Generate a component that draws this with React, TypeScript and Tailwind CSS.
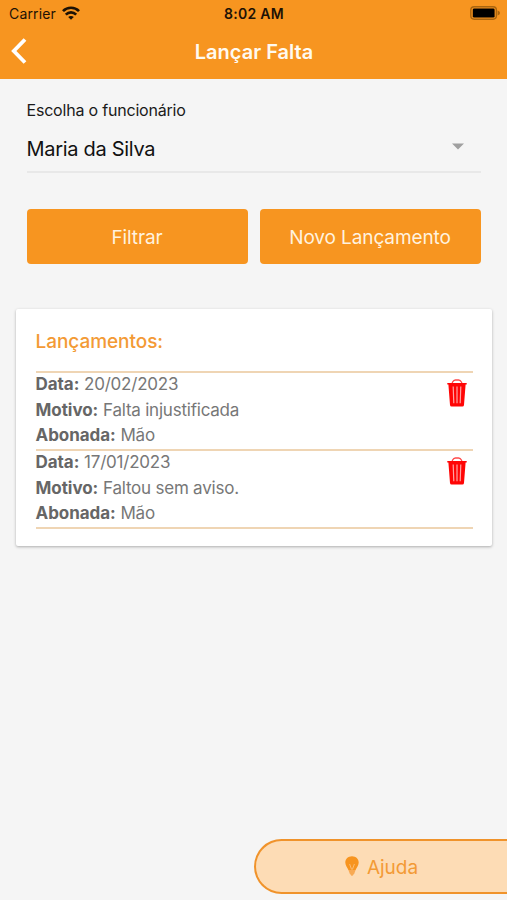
import React, { useState } from 'react';

type Lancamento = {
  id: number;
  data: string;
  motivo: string;
  abonada: string;
};

const LANCAMENTOS: Lancamento[] = [
  { id: 1, data: '20/02/2023', motivo: 'Falta injustificada', abonada: 'Mão' },
  { id: 2, data: '17/01/2023', motivo: 'Faltou sem aviso.', abonada: 'Mão' },
];

function WifiIcon() {
  return (
    <svg className="w-[18px] h-[14px] -mt-0.5" viewBox="0 0 18 14" fill="none" stroke="#1d1205" strokeWidth="2.7">
      <path d="M1 5.1 C5.4 0.6 12.6 0.6 17 5.1" />
      <path d="M3.8 8.6 C6.8 5.7 11.2 5.7 14.2 8.6" />
      <path d="M9 13.8 L6.2 11 C7.8 9.5 10.2 9.5 11.8 11 Z" fill="#1d1205" stroke="none" />
    </svg>
  );
}

function BatteryIcon() {
  return (
    <svg className="w-[31px] h-[14px] -mt-0.5" viewBox="0 0 31 14" fill="none">
      <rect x="0.8" y="0.8" width="25.6" height="12.4" rx="3.4" stroke="#a9650f" strokeWidth="1.4" />
      <rect x="2.8" y="2.4" width="21.8" height="9.2" rx="1.4" fill="#000000" />
      <path d="M27.6 4.6 Q30 5.4 30 7 Q30 8.6 27.6 9.4 Z" fill="#a9650f" />
    </svg>
  );
}

function TrashIcon() {
  return (
    <svg className="w-5 h-7" viewBox="0 0 20 28" fill="none">
      <path d="M5.4 4 V3.2 Q6.6 1 8.4 1 H11.6 Q13.4 1 14.6 3.2 V4" stroke="#ff4a4a" strokeWidth="1.3" />
      <path d="M0.3 3.9 H19.7 V5.4 H18.6 L17 26 Q16.8 27.5 15.4 27.5 H4.6 Q3.2 27.5 3 26 L1.4 5.4 H0.3 Z" fill="#ff0505" />
      <path d="M6.2 7.6 L6.8 24.2 M10 7.6 V24.2 M13.8 7.6 L13.2 24.2" stroke="#ffa3a3" strokeWidth="1.2" />
    </svg>
  );
}

function BulbIcon() {
  return (
    <svg className="w-[14px] h-5 -mt-1" viewBox="0 0 14 20" fill="none">
      <path d="M7 0.2 C3.1 0.2 0.3 3 0.3 6.5 C0.3 9.6 2.4 11.4 3.4 14 H10.6 C11.6 11.4 13.7 9.6 13.7 6.5 C13.7 3 10.9 0.2 7 0.2 Z" fill="#f7941f" />
      <path d="M4.6 8 L6.6 13.5 M9.4 8 L7.4 13.5" stroke="#fbc78b" strokeWidth="0.8" />
      <path d="M3.4 14 H10.6 L9.4 17.2 L7.6 19.8 H6.4 L4.6 17.2 Z" fill="#f8aa54" />
    </svg>
  );
}

function Campo({ rotulo, valor }: { rotulo: string; valor: string }) {
  return (
    <p>
      <span className="font-bold tracking-[-0.05px] text-[#666666]">{rotulo}:</span>{' '}
      <span className="tracking-[-0.22px]">{valor}</span>
    </p>
  );
}

export default function App() {
  const [lancamentos, setLancamentos] = useState<Lancamento[]>(LANCAMENTOS);

  const handleExcluir = (id: number) => {
    setLancamentos(lancamentos.filter(item => item.id !== id));
  };

  return (
    <div className="w-full h-screen overflow-hidden bg-[#f5f5f5] flex flex-col font-['Inter','Liberation_Sans',sans-serif]">
      <header className="h-[79px] shrink-0 bg-[#f79520]">
        {/* Status bar */}
        <div className="h-[27px] grid grid-cols-3 items-center pl-[9px] pr-1.5 text-[14px] text-[#1d1205]">
          <div className="flex items-center gap-1.5">
            <span className="tracking-[0.15px]">Carrier</span>
            <WifiIcon />
          </div>
          <span className="text-center font-semibold tracking-[0.3px] -ml-0.5">8:02 AM</span>
          <div className="flex justify-end">
            <BatteryIcon />
          </div>
        </div>
        <div className="h-[50px] grid grid-cols-[40px_1fr_40px] items-center">
          <button className="pl-[10.5px]" aria-label="Voltar">
            <svg className="w-4 h-[26px] -mt-0.5" viewBox="0 0 16 26" fill="none" stroke="#ffffff" strokeWidth="3.8">
              <path d="M14 1.5 L2.8 13 L14 24.5" />
            </svg>
          </button>
          <h1 className="pl-px text-center text-[20px] font-semibold text-[#fffaf0]">Lançar Falta</h1>
        </div>
      </header>

      <main className="pt-[19px]">
        <section className="px-[26.5px]">
          <label className="block text-[16px] leading-6 tracking-[-0.2px] text-[#1a1a1a]">Escolha o funcionário</label>
          <div className="mt-1 h-[47px] flex items-center justify-between border-b-2 border-[#e8e8e8] pr-[17px]">
            <span className="text-[20px] tracking-[-0.3px] text-[#111111]">Maria da Silva</span>
            <svg className="w-3 h-[7px] mb-1" viewBox="0 0 12 7">
              <path d="M0 0.5 H12 L6 6.5 Z" fill="#a0a0a0" />
            </svg>
          </div>
          <div className="mt-9 grid grid-cols-2 gap-3 text-[19px] tracking-[-0.1px] text-[#fff2df]">
            <button className="h-[55px] pt-[3px] rounded bg-[#f79520]">Filtrar</button>
            <button className="h-[55px] pt-[3px] rounded bg-[#f79520]">Novo Lançamento</button>
          </div>
        </section>

        <section className="mt-[45px] ml-[15.5px] mr-[15px] h-[237px] rounded-xs bg-white pl-5 pr-[19px] pt-[18px] shadow-[0_1px_3px_rgba(0,0,0,0.3)]">
          <h2 className="h-11 text-[19px] leading-[30px] tracking-[-0.05px] font-medium text-[#f39a35]">Lançamentos:</h2>
          <ul className="border-t-2 border-[#efd5b4]">
            {lancamentos.map(item => (
              <li key={item.id} className="h-[78px] flex justify-between border-b-2 border-[#efd5b4]">
                <div className="-mt-px text-[17px] leading-[25.6px] text-[#777777]">
                  <Campo rotulo="Data" valor={item.data} />
                  <Campo rotulo="Motivo" valor={item.motivo} />
                  <Campo rotulo="Abonada" valor={item.abonada} />
                </div>
                <button className="self-start pt-1.5 pr-1.5" aria-label="Excluir" onClick={() => handleExcluir(item.id)}>
                  <TrashIcon />
                </button>
              </li>
            ))}
          </ul>
        </section>
      </main>

      <button className="mt-auto mb-1.5 self-end w-[253px] h-[55px] pt-[3px] flex items-center justify-center gap-2 rounded-l-full border-2 border-r-0 border-[#f0932b] bg-[#fddcb5] text-[19px] text-[#f39a35]">
        <BulbIcon />
        Ajuda
      </button>
    </div>
  );
}
